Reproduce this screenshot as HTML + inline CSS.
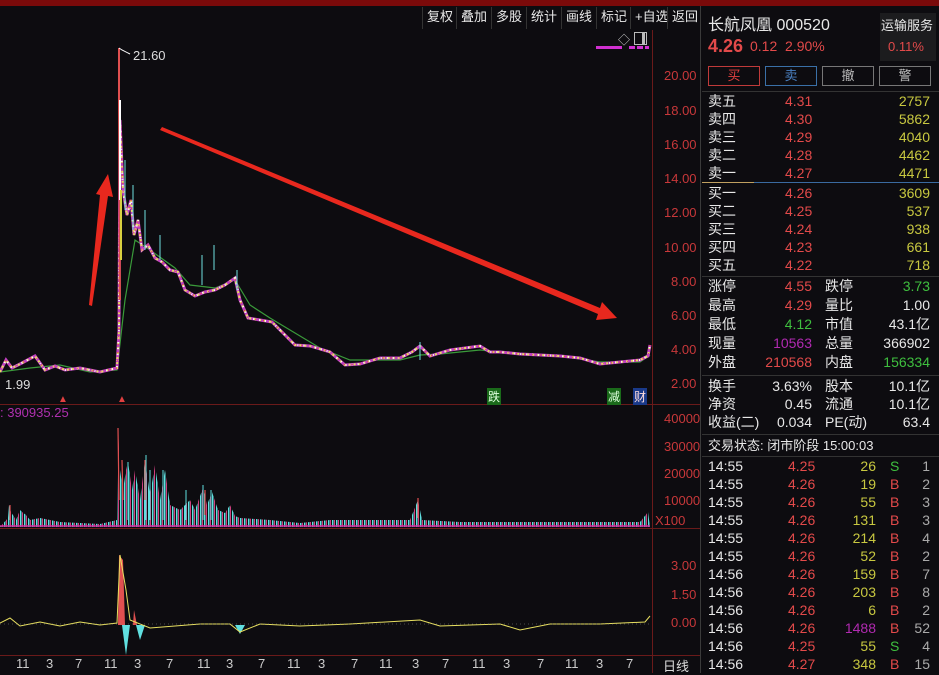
<!DOCTYPE html>
<html><head><meta charset="utf-8"><style>
*{margin:0;padding:0;box-sizing:border-box}
body{width:939px;height:673px;background:#0d0c10;overflow:hidden;position:relative;font-family:"Liberation Sans","Noto Sans CJK SC",sans-serif;color:#ddd;font-size:13px}
.abs{position:absolute;white-space:nowrap}
.tb{position:absolute;top:7px;height:22px;line-height:20px;font-size:13px;color:#e8e8e8;border-left:1px solid #333;padding:0 4px}
.ax{position:absolute;left:664px;font-size:13px;color:#c8383a}
.r{position:absolute;left:708px;width:222px;height:18px;line-height:18px;font-size:14px}
.r span{position:absolute}
.red{color:#e34a4a}.yel{color:#c8c840}.grn{color:#3fbf3f}.wht{color:#e8e8e8}.pur{color:#b02ab0}.gry{color:#aaa}
</style></head><body>
<div class="abs" style="left:0;top:0;width:939px;height:6px;background:#7a0a0a"></div>
<div class="abs" style="left:700px;top:6px;width:1px;height:667px;background:#3a3a3a"></div>
<div class="tb" style="left:422px">复权</div><div class="tb" style="left:456px">叠加</div><div class="tb" style="left:491px">多股</div><div class="tb" style="left:526px">统计</div><div class="tb" style="left:561px">画线</div><div class="tb" style="left:596px">标记</div><div class="tb" style="left:630px">+自选</div><div class="tb" style="left:667px;">返回</div>
<div class="abs" style="left:618px;top:31px;color:#ccc;font-size:12px">◇</div>
<div class="abs" style="left:634px;top:32px;width:13px;height:13px;border:1px solid #bbb"><div style="margin-left:7px;width:3px;height:11px;background:#bbb"></div></div>
<div class="abs" style="left:596px;top:46px;width:26px;height:3px;background:#d030d0"></div>
<div class="abs" style="left:629px;top:46px;width:20px;height:3px;background:repeating-linear-gradient(90deg,#d030d0 0 6px,transparent 6px 8px)"></div>
<div class="abs" style="left:652px;top:30px;width:1px;height:643px;background:#6a1a1a"></div>
<div class="abs" style="left:0;top:404px;width:700px;height:1px;background:#6a1a1a"></div>
<div class="abs" style="left:0;top:528px;width:700px;height:1px;background:#6a1a1a"></div>
<div class="abs" style="left:0;top:655px;width:700px;height:1px;background:#6a1a1a"></div>
<div class="ax" style="top:68px">20.00</div><div class="ax" style="top:103px">18.00</div><div class="ax" style="top:137px">16.00</div><div class="ax" style="top:171px">14.00</div><div class="ax" style="top:205px">12.00</div><div class="ax" style="top:240px">10.00</div><div class="ax" style="top:274px;left:671px">8.00</div><div class="ax" style="top:308px;left:671px">6.00</div><div class="ax" style="top:342px;left:671px">4.00</div><div class="ax" style="top:376px;left:671px">2.00</div>
<div class="ax" style="top:411px">40000</div><div class="ax" style="top:439px">30000</div><div class="ax" style="top:466px">20000</div><div class="ax" style="top:493px">10000</div><div class="ax" style="top:513px;left:655px">X100</div>
<div class="ax" style="top:558px;left:671px">3.00</div><div class="ax" style="top:587px;left:671px">1.50</div><div class="ax" style="top:615px;left:671px">0.00</div>
<div class="abs" style="left:663px;top:656px;color:#ddd">日线</div>
<div class="abs" style="left:0;top:656px;width:650px;height:17px;color:#ccc;font-size:13px">
<span class="abs" style="left:16px">11</span><span class="abs" style="left:46px">3</span><span class="abs" style="left:75px">7</span><span class="abs" style="left:104px">11</span><span class="abs" style="left:134px">3</span><span class="abs" style="left:166px">7</span><span class="abs" style="left:197px">11</span><span class="abs" style="left:226px">3</span><span class="abs" style="left:258px">7</span><span class="abs" style="left:287px">11</span><span class="abs" style="left:318px">3</span><span class="abs" style="left:351px">7</span><span class="abs" style="left:379px">11</span><span class="abs" style="left:412px">3</span><span class="abs" style="left:442px">7</span><span class="abs" style="left:472px">11</span><span class="abs" style="left:503px">3</span><span class="abs" style="left:537px">7</span><span class="abs" style="left:565px">11</span><span class="abs" style="left:596px">3</span><span class="abs" style="left:626px">7</span></div>
<div class="abs" style="left:5px;top:377px;color:#ddd">1.99</div>
<div class="abs" style="left:133px;top:48px;color:#ddd">21.60</div>
<div class="abs" style="left:0;top:405px;color:#b030b0;font-size:13px">: 390935.25</div>
<div class="abs" style="left:487px;top:388px;background:#1a6a1a;color:#dfd;font-size:12px;padding:0 1px">跌</div>
<div class="abs" style="left:607px;top:388px;background:#1a6a1a;color:#dfd;font-size:12px;padding:0 1px">减</div>
<div class="abs" style="left:633px;top:388px;background:#1a3a8a;color:#fdd;font-size:12px;padding:0 1px">财</div>
<svg class="abs" style="left:0;top:0" width="652" height="673">
<defs>
<pattern id="vs" width="4" height="10" patternUnits="userSpaceOnUse"><rect x="0" y="0" width="1.5" height="10" fill="#60e0e0"/><rect x="2" y="0" width="1" height="10" fill="#d04080"/></pattern>
</defs>
<g fill="none">
<polyline stroke="#3a9a3a" stroke-width="1.2" points="0,372 30,368 60,365 90,372 117,370 125,300 135,240 150,250 175,268 190,285 215,288 235,280 250,305 270,318 290,330 320,348 350,360 400,360 420,355 440,354 480,350 500,352 560,356 600,362 640,362 650,355"/>
<g id="pl">
<polyline stroke="#c040c0" stroke-width="3" points="0,372 6,360 12,368 20,364 35,356 45,370 55,366 65,370 80,368 100,372 117,368 119,330 120,120 123,190 127,215 131,200 134,235 138,220 142,250 148,245 155,258 162,262 170,270 178,272 185,290 195,296 205,292 215,290 225,285 235,278 240,300 248,318 260,320 272,322 285,335 295,345 310,346 330,352 345,365 360,364 380,358 400,358 412,352 420,346 430,356 450,350 465,348 480,346 490,352 500,352 520,354 540,355 560,356 580,358 600,364 620,362 640,360 648,356 650,345"/>
<polyline stroke="#e8e060" stroke-width="2" stroke-dasharray="2,3" points="0,372 6,360 12,368 20,364 35,356 45,370 55,366 65,370 80,368 100,372 117,368 119,330 120,120 123,190 127,215 131,200 134,235 138,220 142,250 148,245 155,258 162,262 170,270 178,272 185,290 195,296 205,292 215,290 225,285 235,278 240,300 248,318 260,320 272,322 285,335 295,345 310,346 330,352 345,365 360,364 380,358 400,358 412,352 420,346 430,356 450,350 465,348 480,346 490,352 500,352 520,354 540,355 560,356 580,358 600,364 620,362 640,360 648,356 650,345"/>
<polyline stroke="#ffffff" stroke-width="2" stroke-dasharray="1,5" stroke-dashoffset="2" points="0,372 6,360 12,368 20,364 35,356 45,370 55,366 65,370 80,368 100,372 117,368 119,330 120,120 123,190 127,215 131,200 134,235 138,220 142,250 148,245 155,258 162,262 170,270 178,272 185,290 195,296 205,292 215,290 225,285 235,278 240,300 248,318 260,320 272,322 285,335 295,345 310,346 330,352 345,365 360,364 380,358 400,358 412,352 420,346 430,356 450,350 465,348 480,346 490,352 500,352 520,354 540,355 560,356 580,358 600,364 620,362 640,360 648,356 650,345"/>
<polyline stroke="#e05050" stroke-width="1.5" stroke-dasharray="1,7" stroke-dashoffset="4" points="0,372 6,360 12,368 20,364 35,356 45,370 55,366 65,370 80,368 100,372 117,368 119,330 120,120 123,190 127,215 131,200 134,235 138,220 142,250 148,245 155,258 162,262 170,270 178,272 185,290 195,296 205,292 215,290 225,285 235,278 240,300 248,318 260,320 272,322 285,335 295,345 310,346 330,352 345,365 360,364 380,358 400,358 412,352 420,346 430,356 450,350 465,348 480,346 490,352 500,352 520,354 540,355 560,356 580,358 600,364 620,362 640,360 648,356 650,345"/>
</g>
<polyline stroke="#e05050" stroke-width="2" points="119,48 119,110 120,300"/>
<polyline stroke="#ffffff" stroke-width="2" points="120,100 120,200"/>
<polyline stroke="#d8d040" stroke-width="2" points="121,190 121,260"/>
<polyline stroke="#ffffff" stroke-width="1" points="119,48 122,50 130,54"/>
</g>
<g stroke="#70e0e0" stroke-width="1">
<line x1="133" y1="185" x2="133" y2="230"/><line x1="125" y1="160" x2="125" y2="210"/><line x1="145" y1="210" x2="145" y2="250"/><line x1="214" y1="245" x2="214" y2="270"/><line x1="237" y1="270" x2="237" y2="290"/><line x1="420" y1="342" x2="420" y2="360"/><line x1="202" y1="255" x2="202" y2="285"/><line x1="160" y1="235" x2="160" y2="260"/>
</g>
<polygon fill="#e8281e" points="89,305 100,195 96,194 108,174 113,197 108,196 92,306"/>
<polygon fill="#e8281e" points="160,130 162,127 600,308 602,302 617,318 596,320 598,314"/>
<!-- volume -->
<path fill="url(#vs)" d="M0,527 L8,518 9,505 11,512 16,520 20,510 22,512 26,515 30,520 40,518 60,522 100,524 117,520 118,428 120,470 123,490 126,470 128,462 132,490 135,470 140,500 145,460 150,495 155,465 160,500 165,470 170,505 180,510 190,500 195,510 203,488 207,505 212,492 218,510 225,513 230,505 235,516 240,518 270,520 300,523 330,520 360,520 410,520 418,500 422,520 460,522 500,522 600,522 640,522 648,512 650,527 Z"/>
<path fill="none" stroke="#e05050" stroke-width="1.2" d="M118,428 L119,500 M122,460 L123,500 M205,490 L205,515 M418,498 L418,518 M145,460 L145,500 M10,505 L10,520"/>
<path fill="none" stroke="#60e0e0" stroke-width="1" d="M128,462 L128,520 M146,455 L146,520 M150,470 L150,520 M163,470 L163,520 M186,490 L186,520 M203,485 L203,520 M211,490 L211,520"/>
<line x1="0" y1="526" x2="650" y2="526" stroke="#d030a0" stroke-width="1.5"/>
<!-- indicator -->
<path fill="#e05050" d="M118,625 L119,555 L123,560 L125,625 Z M133,625 L134,610 L137,625 Z"/>
<path fill="#60e0e0" d="M122,625 L126,655 L130,625 Z M136,625 L140,640 L145,625 Z M235,625 L240,634 L245,625 Z"/>
<polyline fill="none" stroke="#e8e060" stroke-width="1" points="0,623 10,618 20,626 40,622 60,626 80,622 100,625 117,623 120,555 126,590 130,620 150,628 200,624 230,624 240,632 260,624 300,626 350,624 420,620 440,626 500,624 520,630 550,624 600,624 645,622 650,616"/>
<line x1="0" y1="624" x2="650" y2="624" stroke="#888" stroke-width="0.5" stroke-dasharray="1,3"/>
<text x="117" y="402" fill="#e04040" font-size="10">▲</text><text x="58" y="402" fill="#e04040" font-size="10">▲</text>
</svg>
<div class="abs wht" style="left:708px;top:11px;font-size:16px">长航凤凰 000520</div>
<div class="abs" style="left:880px;top:13px;width:56px;height:48px;background:#1c1c1e"></div>
<div class="abs wht" style="left:881px;top:15px;font-size:13px">运输服务</div>
<div class="abs red" style="left:888px;top:39px;font-size:13px">0.11%</div>
<div class="abs red" style="left:708px;top:36px;font-size:18px;font-weight:bold">4.26</div>
<div class="abs red" style="left:750px;top:38px;font-size:14px">0.12&nbsp;&nbsp;2.90%</div>
<div class="abs" style="left:708px;top:66px;width:52px;height:20px;border:1px solid #c03a3a;color:#e04040;text-align:center;line-height:18px">买</div>
<div class="abs" style="left:765px;top:66px;width:52px;height:20px;border:1px solid #3a70a8;color:#4a80c0;text-align:center;line-height:18px">卖</div>
<div class="abs" style="left:822px;top:66px;width:52px;height:20px;border:1px solid #777;color:#bbb;text-align:center;line-height:18px">撤</div>
<div class="abs" style="left:879px;top:66px;width:52px;height:20px;border:1px solid #777;color:#bbb;text-align:center;line-height:18px">警</div>
<div class="abs" style="left:702px;top:91px;width:237px;height:1px;background:#333"></div>
<div class="abs" style="left:702px;top:182px;width:237px;height:1px;background:#3a6aa0"></div>
<div class="abs" style="left:702px;top:182px;width:52px;height:1px;background:#c0a060"></div>
<div class="abs" style="left:702px;top:276px;width:237px;height:1px;background:#333"></div>
<div class="abs" style="left:702px;top:375px;width:237px;height:1px;background:#333"></div>
<div class="abs" style="left:702px;top:434px;width:237px;height:1px;background:#333"></div>
<div class="abs" style="left:702px;top:456px;width:237px;height:1px;background:#333"></div>

<div class="r" style="top:92px"><span class="wht">卖五</span><span class="red" style="left:77px">4.31</span><span class="yel" style="right:0">2757</span></div>
<div class="r" style="top:110px"><span class="wht">卖四</span><span class="red" style="left:77px">4.30</span><span class="yel" style="right:0">5862</span></div>
<div class="r" style="top:128px"><span class="wht">卖三</span><span class="red" style="left:77px">4.29</span><span class="yel" style="right:0">4040</span></div>
<div class="r" style="top:146px"><span class="wht">卖二</span><span class="red" style="left:77px">4.28</span><span class="yel" style="right:0">4462</span></div>
<div class="r" style="top:164px"><span class="wht">卖一</span><span class="red" style="left:77px">4.27</span><span class="yel" style="right:0">4471</span></div>
<div class="r" style="top:184px"><span class="wht">买一</span><span class="red" style="left:77px">4.26</span><span class="yel" style="right:0">3609</span></div>
<div class="r" style="top:202px"><span class="wht">买二</span><span class="red" style="left:77px">4.25</span><span class="yel" style="right:0">537</span></div>
<div class="r" style="top:220px"><span class="wht">买三</span><span class="red" style="left:77px">4.24</span><span class="yel" style="right:0">938</span></div>
<div class="r" style="top:238px"><span class="wht">买四</span><span class="red" style="left:77px">4.23</span><span class="yel" style="right:0">661</span></div>
<div class="r" style="top:256px"><span class="wht">买五</span><span class="red" style="left:77px">4.22</span><span class="yel" style="right:0">718</span></div>

<div class="r" style="top:277px"><span class="wht">涨停</span><span class="red" style="right:118px">4.55</span><span class="wht" style="left:117px">跌停</span><span class="grn" style="right:0">3.73</span></div>
<div class="r" style="top:296px"><span class="wht">最高</span><span class="red" style="right:118px">4.29</span><span class="wht" style="left:117px">量比</span><span class="wht" style="right:0">1.00</span></div>
<div class="r" style="top:315px"><span class="wht">最低</span><span class="grn" style="right:118px">4.12</span><span class="wht" style="left:117px">市值</span><span class="wht" style="right:0">43.1亿</span></div>
<div class="r" style="top:334px"><span class="wht">现量</span><span class="pur" style="right:118px">10563</span><span class="wht" style="left:117px">总量</span><span class="wht" style="right:0">366902</span></div>
<div class="r" style="top:353px"><span class="wht">外盘</span><span class="red" style="right:118px">210568</span><span class="wht" style="left:117px">内盘</span><span class="grn" style="right:0">156334</span></div>
<div class="r" style="top:377px"><span class="wht">换手</span><span class="wht" style="right:118px">3.63%</span><span class="wht" style="left:117px">股本</span><span class="wht" style="right:0">10.1亿</span></div>
<div class="r" style="top:395px"><span class="wht">净资</span><span class="wht" style="right:118px">0.45</span><span class="wht" style="left:117px">流通</span><span class="wht" style="right:0">10.1亿</span></div>
<div class="r" style="top:413px"><span class="wht">收益(二)</span><span class="wht" style="right:118px">0.034</span><span class="wht" style="left:117px">PE(动)</span><span class="wht" style="right:0">63.4</span></div>
<div class="r" style="top:437px;font-size:13px"><span class="wht">交易状态: 闭市阶段 15:00:03</span></div>

<div class="r" style="top:457px"><span class="wht">14:55</span><span class="red" style="left:80px">4.25</span><span class="yel" style="right:54px">26</span><span class="grn" style="left:182px">S</span><span class="gry" style="right:0">1</span></div>
<div class="r" style="top:475px"><span class="wht">14:55</span><span class="red" style="left:80px">4.26</span><span class="yel" style="right:54px">19</span><span class="red" style="left:182px">B</span><span class="gry" style="right:0">2</span></div>
<div class="r" style="top:493px"><span class="wht">14:55</span><span class="red" style="left:80px">4.26</span><span class="yel" style="right:54px">55</span><span class="red" style="left:182px">B</span><span class="gry" style="right:0">3</span></div>
<div class="r" style="top:511px"><span class="wht">14:55</span><span class="red" style="left:80px">4.26</span><span class="yel" style="right:54px">131</span><span class="red" style="left:182px">B</span><span class="gry" style="right:0">3</span></div>
<div class="r" style="top:529px"><span class="wht">14:55</span><span class="red" style="left:80px">4.26</span><span class="yel" style="right:54px">214</span><span class="red" style="left:182px">B</span><span class="gry" style="right:0">4</span></div>
<div class="r" style="top:547px"><span class="wht">14:55</span><span class="red" style="left:80px">4.26</span><span class="yel" style="right:54px">52</span><span class="red" style="left:182px">B</span><span class="gry" style="right:0">2</span></div>
<div class="r" style="top:565px"><span class="wht">14:56</span><span class="red" style="left:80px">4.26</span><span class="yel" style="right:54px">159</span><span class="red" style="left:182px">B</span><span class="gry" style="right:0">7</span></div>
<div class="r" style="top:583px"><span class="wht">14:56</span><span class="red" style="left:80px">4.26</span><span class="yel" style="right:54px">203</span><span class="red" style="left:182px">B</span><span class="gry" style="right:0">8</span></div>
<div class="r" style="top:601px"><span class="wht">14:56</span><span class="red" style="left:80px">4.26</span><span class="yel" style="right:54px">6</span><span class="red" style="left:182px">B</span><span class="gry" style="right:0">2</span></div>
<div class="r" style="top:619px"><span class="wht">14:56</span><span class="red" style="left:80px">4.26</span><span class="pur" style="right:54px">1488</span><span class="red" style="left:182px">B</span><span class="gry" style="right:0">52</span></div>
<div class="r" style="top:637px"><span class="wht">14:56</span><span class="red" style="left:80px">4.25</span><span class="yel" style="right:54px">55</span><span class="grn" style="left:182px">S</span><span class="gry" style="right:0">4</span></div>
<div class="r" style="top:655px"><span class="wht">14:56</span><span class="red" style="left:80px">4.27</span><span class="yel" style="right:54px">348</span><span class="red" style="left:182px">B</span><span class="gry" style="right:0">15</span></div>
</body></html>
